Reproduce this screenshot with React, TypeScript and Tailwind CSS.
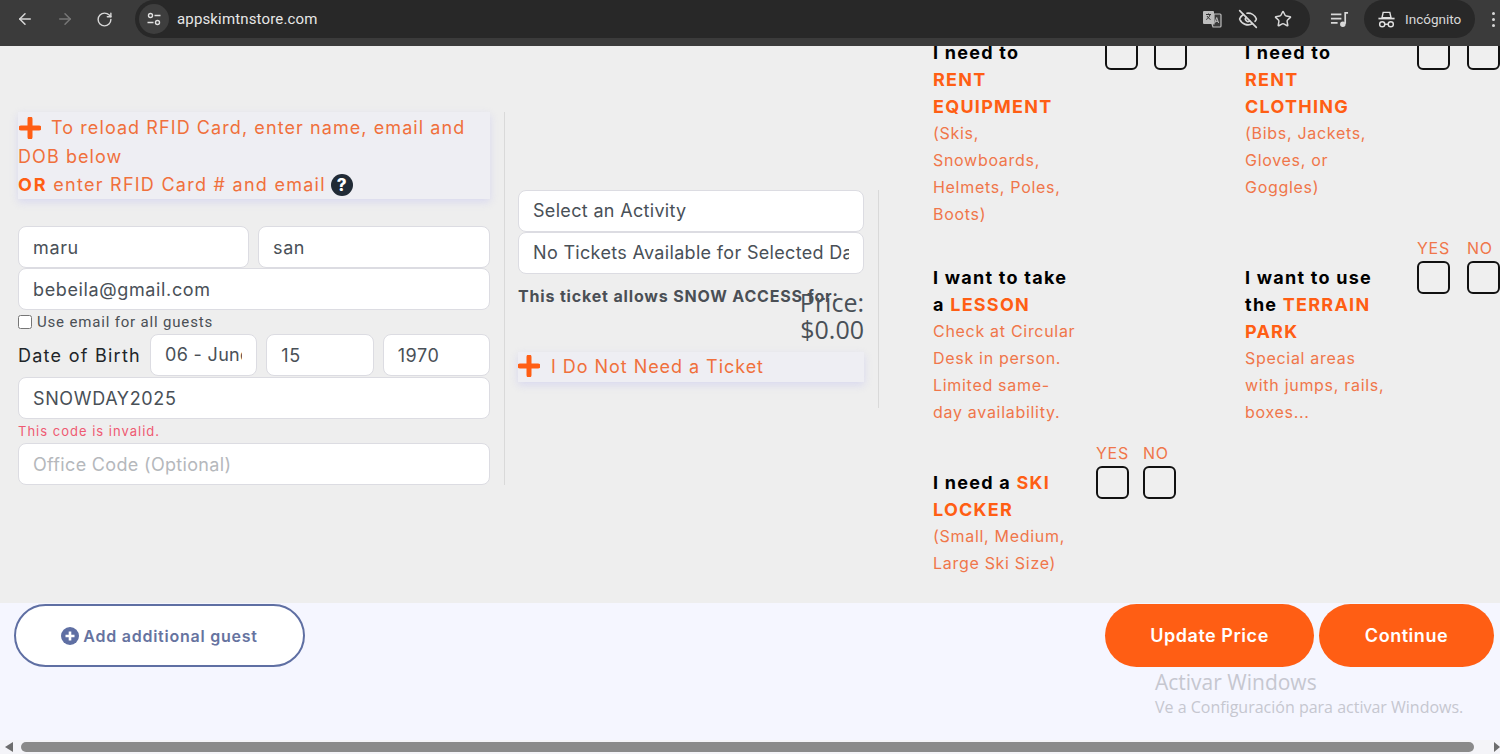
import { ArrowLeft, ArrowRight, RotateCw, EyeOff, Star } from 'lucide-react';

const inputBase =
  'h-[42px] w-full min-w-0 rounded-lg border border-[#dcdce2] bg-white px-[14px] text-[18px] text-[#495057] placeholder:text-[#b5b8bc] outline-none';
const inputClass = `${inputBase} tracking-[0.035em]`;
const inputTight = `${inputBase} tracking-[0.018em] pb-[2px]`;

function Plus() {
  return (
    <svg viewBox="0 0 22 22" className="h-[22px] w-[22px] shrink-0">
      <path d="M11 2v18M2 11h18" stroke="#ff5e14" strokeWidth="5" strokeLinecap="round" />
    </svg>
  );
}

function YesNo({ left, top, gap, labels }: { left: string; top: string; gap: string; labels?: boolean }) {
  return (
    <div className={`absolute flex ${left} ${top} ${gap}`}>
      {['YES', 'NO'].map((label) => (
        <div key={label} className="relative h-[33px] w-[33px] rounded-md border-2 border-[#111] bg-[#efefef]">
          {labels && (
            <span className="absolute left-[-2px] top-[-25px] text-[16px] font-normal leading-5 text-[#f0764a]">
              {label}
            </span>
          )}
        </div>
      ))}
    </div>
  );
}

export default function App() {
  return (
    <div className="flex h-screen flex-col overflow-hidden bg-[#eeeeee] font-['Inter',sans-serif]">
      {/* browser toolbar */}
      <div className="flex h-[46px] shrink-0 items-start bg-[#3b3b3b] text-[#d8d8d8]">
        <div className="flex h-[38px] w-[135px] shrink-0 items-center gap-[22px] pl-[16px]">
          <ArrowLeft size={18} />
          <ArrowRight size={18} className="text-[#777]" />
          <RotateCw size={17} />
        </div>
        <div className="flex h-[38px] w-[1175px] shrink-0 items-center rounded-[19px] bg-[#282828]">
          <div className="ml-[4px] flex h-[30px] w-[30px] items-center justify-center rounded-full bg-[#3e3e3e]">
            <svg viewBox="0 0 16 16" className="h-4 w-4" fill="none" stroke="#e0e0e0" strokeWidth="1.4">
              <circle cx="4.5" cy="4.5" r="2" />
              <path d="M8.5 4.5h6M1.5 11.5h6" />
              <circle cx="11.5" cy="11.5" r="2" />
            </svg>
          </div>
          <span className="ml-[8px] font-['Roboto',sans-serif] text-[15px] tracking-[0.01em] text-[#e6e6e6]">appskimtnstore.com</span>
          <div className="ml-auto flex items-center gap-[16px] pr-[18px]">
            <svg viewBox="0 0 20 20" className="h-5 w-5">
              <rect x="1" y="2" width="11" height="13" rx="1" fill="#bdbdbd" />
              <path d="M4 5.5h5M6.5 4.5v1M8 5.5c-.5 2.5-2 4-3.800 5M5 7c.7 1.5 2 2.800 3.500 3.500" fill="none" stroke="#333" strokeWidth="1" />
              <path d="M12 5h6a1 1 0 0 1 1 1v11a1 1 0 0 1-1 1h-7l-1-3h2z" fill="#3a3a3a" stroke="#bdbdbd" strokeWidth="1.2" />
              <path d="M12.800 14l1.900-5.500 1.900 5.500M13.400 12.300h2.600" fill="none" stroke="#bdbdbd" strokeWidth="1" />
            </svg>
            <EyeOff size={20} />
            <Star size={18} />
          </div>
        </div>
        <div className="ml-[20px] flex h-[38px] items-center">
          <svg viewBox="0 0 20 20" className="h-[19px] w-[19px]" fill="none" stroke="#d8d8d8" strokeWidth="1.8">
            <path d="M1 4.5h11M1 9h11M1 13.5h7" />
            <path d="M16 14.5V3h3" />
            <circle cx="13.5" cy="15" r="2" fill="#d8d8d8" />
          </svg>
        </div>
        <div className="ml-[15px] flex h-[38px] w-[111px] items-center gap-[9px] rounded-[19px] bg-[#282828] pl-[13px]">
          <svg viewBox="0 0 20 20" className="h-[19px] w-[19px]" fill="none" stroke="#e0e0e0" strokeWidth="1.5">
            <path d="M6.5 2.500h7l1.200 5.500H5.300z" />
            <path d="M1.500 9h17" strokeWidth="1.8" />
            <circle cx="5.500" cy="15" r="2.700" />
            <circle cx="14.500" cy="15" r="2.700" />
            <path d="M8.200 15h3.600" />
          </svg>
          <span className="font-['Roboto',sans-serif] text-[13.5px] text-[#d8d8d8]">Incógnito</span>
        </div>
        <div className="ml-[17px] flex h-[38px] flex-col items-center justify-center gap-[3px]">
          <span className="h-[3px] w-[3px] rounded-full bg-[#d8d8d8]" />
          <span className="h-[3px] w-[3px] rounded-full bg-[#d8d8d8]" />
          <span className="h-[3px] w-[3px] rounded-full bg-[#d8d8d8]" />
        </div>
      </div>

      {/* form */}
      <div className="flex h-[557px] shrink-0 items-start overflow-hidden pl-[18px]">
        <div className="mt-[66px] h-[373px] w-[487px] shrink-0 border-r border-[#d9d9d9] pr-[14px]">
          <div className="h-[87px] w-[472px] bg-[#eeeef3] pt-[2px] text-[18px] leading-[28.5px] tracking-[0.06em] text-[#f0703c] shadow-[0_3px_8px_rgba(190,190,240,0.45)]">
            <div className="flex items-center pl-px">
              <Plus />
              <span className="ml-[10px]">To reload RFID Card, enter name, email and</span>
            </div>
            <div>DOB below</div>
            <div className="flex items-center">
              <span className="font-bold tracking-[0.1em] text-[#ff5e14]">OR</span>
              <span className="ml-[6px] tracking-[0.07em]">enter RFID Card # and email</span>
              <span className="ml-[5px] flex h-[22px] w-[22px] items-center justify-center rounded-full bg-[#212b36] text-[17px] font-extrabold leading-none tracking-normal text-white">
                ?
              </span>
            </div>
          </div>

          <div className="mt-[27px] grid w-[472px] grid-cols-[231px_232px] gap-[9px]">
            <input className={inputClass} defaultValue="maru" readOnly />
            <input className={inputClass} defaultValue="san" readOnly />
          </div>
          <input className={`${inputClass} w-[472px]`} defaultValue="bebeila@gmail.com" readOnly />
          <label className="mt-[3px] flex h-[18px] items-center font-['Roboto',sans-serif] text-[15px] tracking-[0.055em] text-[#4a4f55]">
            <input type="checkbox" className="mr-[5px] h-[14px] w-[14px]" readOnly />
            Use email for all guests
          </label>
          <div className="mt-[3px] flex w-[472px] items-center">
            <span className="w-[132px] shrink-0 whitespace-nowrap text-[18px] tracking-[0.07em] text-[#212529]">Date of Birth</span>
            <div className="grid flex-1 grid-cols-3 gap-[9px]">
              <input className={inputTight} defaultValue="06 - June" readOnly />
              <input className={inputClass} defaultValue="15" readOnly />
              <input className={inputClass} defaultValue="1970" readOnly />
            </div>
          </div>
          <input className={`${inputClass} mt-[1px] w-[472px]`} defaultValue="SNOWDAY2025" readOnly />
          <p className="mt-[2px] h-[22px] text-[13px] leading-5 tracking-[1px] text-[#ee5a72]">This code is invalid.</p>
          <input className={`${inputBase} w-[472px] tracking-[0.018em]`} placeholder="Office Code (Optional)" readOnly />
        </div>

        <div className="mt-[144px] h-[218px] w-[374px] shrink-0 border-r border-[#d9d9d9] pl-[13px] pr-[14px]">
          <input className={inputTight} defaultValue="Select an Activity" readOnly />
          <input className={inputTight} defaultValue="No Tickets Available for Selected Date" readOnly />
          <p className="mt-[12px] whitespace-nowrap text-[16px] font-bold leading-5 tracking-[0.052em] text-[#4a4f55]">
            This ticket allows SNOW ACCESS for:
          </p>
          <div className="ml-auto mt-[-17px] w-[90px] text-right font-['Open_Sans',sans-serif] text-[25px] leading-[27px] text-[#495057]">
            Price:
            <br />
            $0.00
          </div>
          <div className="mt-[9px] flex h-[30px] items-center bg-[#eeeef3] pb-[2px] text-[18px] tracking-[0.053em] text-[#f0703c] shadow-[0_3px_8px_rgba(190,190,240,0.45)]">
            <Plus />
            <span className="ml-[11px]">I Do Not Need a Ticket</span>
          </div>
        </div>

        <div className="ml-[54px] mt-[-7px] grid shrink-0 grid-cols-[312px_312px] grid-rows-[224.5px_205.5px_auto] text-[16px] leading-[27px] tracking-[0.7px] text-[#f0764a]">
          <div className="relative">
            <YesNo left="left-[172px]" top="top-[-2px]" gap="gap-[16px]" />
            <p className="text-[18px] font-bold tracking-[1.25px] text-black">I need to</p>
            <p className="text-[18px] font-bold tracking-[1.25px] text-[#ff5e14]">RENT<br />EQUIPMENT</p>
            <p>(Skis,<br />Snowboards,<br />Helmets, Poles,<br />Boots)</p>
          </div>
          <div className="relative">
            <YesNo left="left-[172px]" top="top-[-2px]" gap="gap-[17px]" />
            <p className="text-[18px] font-bold tracking-[1.25px] text-black">I need to</p>
            <p className="text-[18px] font-bold tracking-[1.25px] text-[#ff5e14]">RENT<br />CLOTHING</p>
            <p>(Bibs, Jackets,<br />Gloves, or<br />Goggles)</p>
          </div>
          <div>
            <p className="text-[18px] font-bold tracking-[1.25px] text-black">I want to take<br />a <span className="text-[#ff5e14]">LESSON</span></p>
            <p>Check at Circular<br />Desk in person.<br />Limited same-<br />day availability.</p>
          </div>
          <div className="relative">
            <YesNo left="left-[172px]" top="top-[-3px]" gap="gap-[17px]" labels />
            <p className="text-[18px] font-bold tracking-[1.25px] text-black">I want to use<br />the <span className="text-[#ff5e14]">TERRAIN<br />PARK</span></p>
            <p>Special areas<br />with jumps, rails,<br />boxes...</p>
          </div>
          <div className="relative">
            <YesNo left="left-[163px]" top="top-[-3px]" gap="gap-[14px]" labels />
            <p className="text-[18px] font-bold tracking-[1.25px] text-black">I need a <span className="text-[#ff5e14]">SKI<br />LOCKER</span></p>
            <p>(Small, Medium,<br />Large Ski Size)</p>
          </div>
        </div>
      </div>

      {/* footer */}
      <div className="relative flex h-[137px] shrink-0 items-start justify-between bg-[#f5f6ff] pl-[14px] pr-[6px] pt-px">
        <button className="flex h-[63px] w-[291px] items-center justify-center gap-[4px] rounded-full border-2 border-[#5f6fa3] bg-white text-[16px] font-semibold tracking-[0.047em] text-[#66739f]">
          <svg viewBox="0 0 18 18" className="h-[18px] w-[18px]">
            <circle cx="9" cy="9" r="9" fill="#5f6fa3" />
            <path d="M9 4.5v9M4.5 9h9" stroke="white" strokeWidth="2.6" />
          </svg>
          Add additional guest
        </button>
        <div className="flex gap-[5px]">
          <button className="h-[63px] w-[209px] rounded-full bg-[#ff5e14] text-[18px] font-semibold tracking-[0.03em] text-white">Update Price</button>
          <button className="h-[63px] w-[175px] rounded-full bg-[#ff5e14] text-[18px] font-semibold tracking-[0.03em] text-white">Continue</button>
        </div>
        {/* windows activation watermark */}
        <div className="absolute left-[1155px] top-[65px] font-['Open_Sans',sans-serif] text-[#c6c7d0]">
          <p className="text-[21px] leading-7">Activar Windows</p>
          <p className="text-[16px] leading-[23px]">Ve a Configuración para activar Windows.</p>
        </div>
      </div>

      {/* scrollbar */}
      <div className="flex h-[14px] shrink-0 items-center bg-[#f4f4f8]">
        <span className="ml-[5px] h-0 w-0 border-y-[5px] border-r-[8px] border-y-transparent border-r-[#6d6d6d]" />
        <div className="ml-[8px] h-[10px] w-[1453px] rounded-full bg-[#8a8a8a]" />
        <span className="ml-[20px] h-0 w-0 border-y-[5px] border-l-[6px] border-y-transparent border-l-[#6d6d6d]" />
      </div>
    </div>
  );
}
